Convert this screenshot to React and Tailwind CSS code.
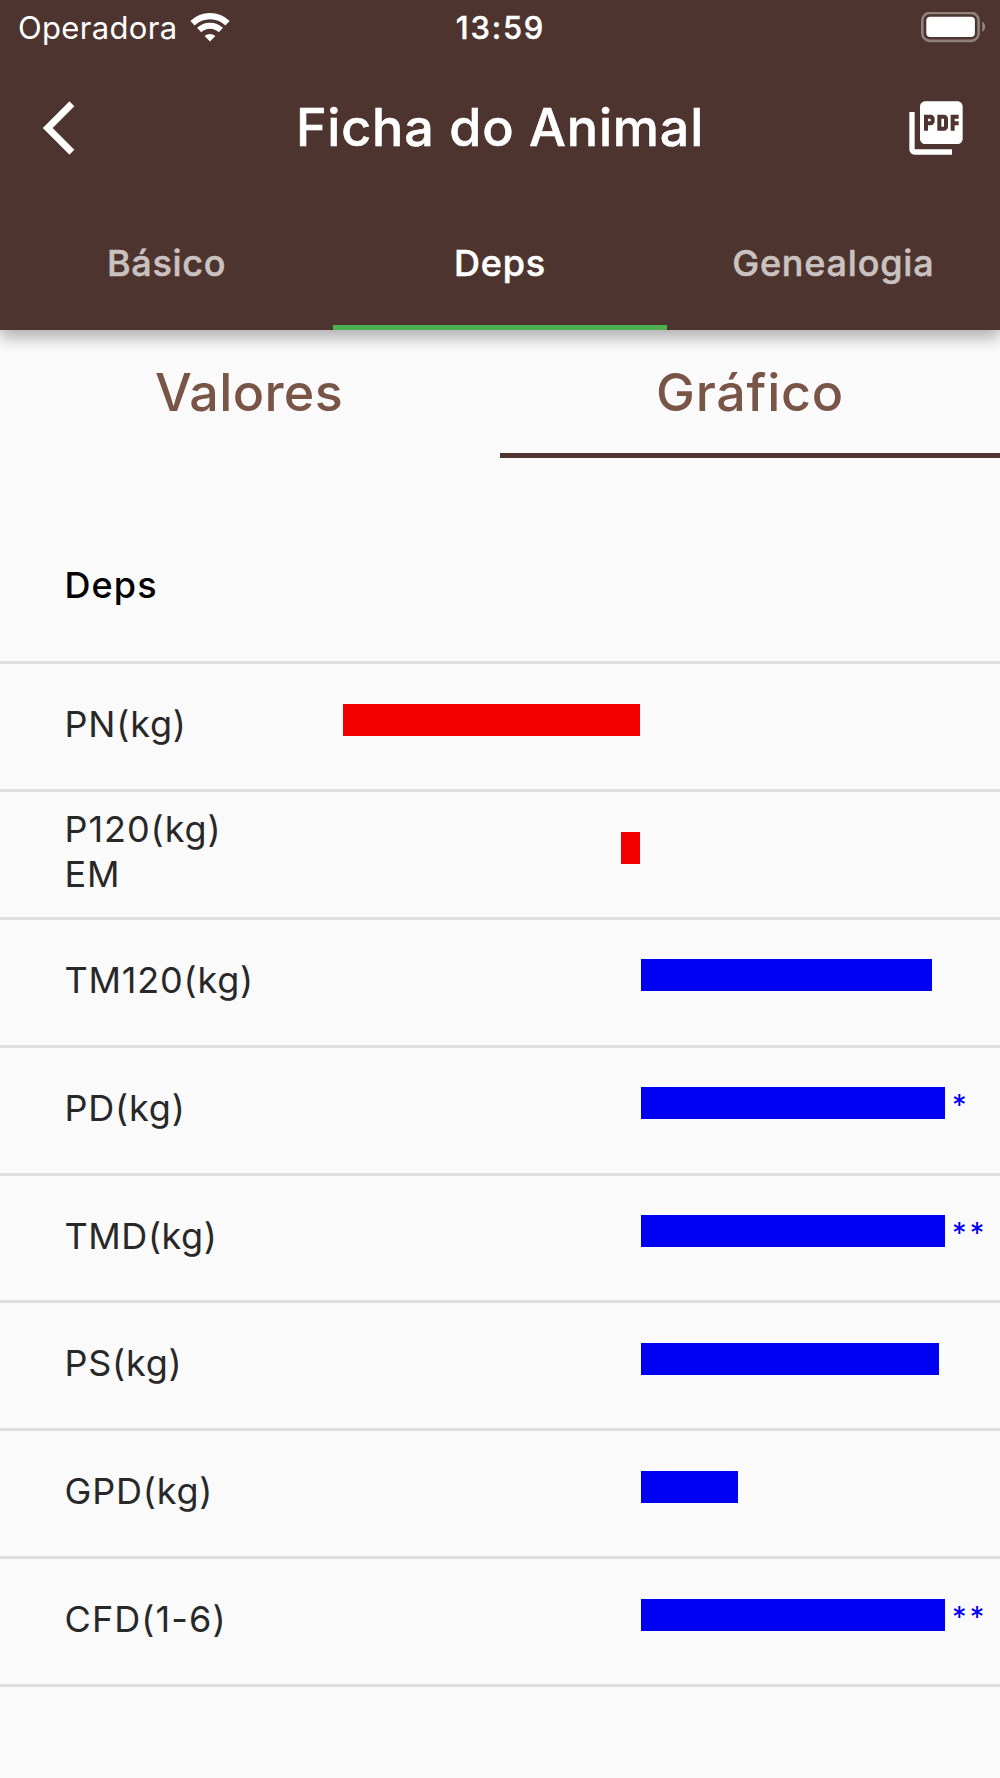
import { MdPictureAsPdf } from "react-icons/md";

const rows = [
  { label: "PN(kg)", spacing: "tracking-[0.8px]", negative: 297.4 },
  { label: "P120(kg) EM", spacing: "tracking-[0.95px]", negative: 19 },
  { label: "TM120(kg)", spacing: "tracking-[0.8px]", positive: 291.4 },
  { label: "PD(kg)", spacing: "tracking-[0.8px]", positive: 304, mark: "*" },
  { label: "TMD(kg)", spacing: "tracking-[0.55px]", positive: 304, mark: "**" },
  { label: "PS(kg)", spacing: "tracking-[0.75px]", positive: 298 },
  { label: "GPD(kg)", spacing: "tracking-[0.8px]", positive: 97 },
  { label: "CFD(1-6)", spacing: "tracking-[1.1px]", positive: 304, mark: "**" },
];

function WifiIcon() {
  return (
    <svg className="h-[30px] w-[40px] shrink-0" viewBox="0 0 40 30" fill="none">
      <path d="M2.5 10.2A25.3 25.3 0 0 1 37.5 10.2" stroke="white" strokeWidth="6.2" />
      <path d="M9.1 17A15.8 15.8 0 0 1 30.9 17" stroke="white" strokeWidth="6" />
      <path d="M20 28.5L14.6 22.9A8.6 8.6 0 0 1 25.4 22.9Z" fill="white" />
    </svg>
  );
}

function BatteryIcon() {
  return (
    <svg className="h-[32px] w-[66px] shrink-0" viewBox="0 0 66 32" fill="none">
      <rect x="2.3" y="0.9" width="56.3" height="28" rx="7.5" stroke="white" strokeOpacity="0.38" strokeWidth="2.6" />
      <rect x="6.3" y="4.8" width="48.6" height="20.3" rx="4" fill="white" />
      <path d="M62.3 9.8C66 11.3 66 18.3 62.3 19.8Z" fill="white" fillOpacity="0.42" />
    </svg>
  );
}

function StatusBar() {
  return (
    <div className="grid h-[55px] grid-cols-3 items-center pl-[18px] pr-[14px] text-[31px] leading-[37px]">
      <div className="flex items-center">
        <span className="w-[172px] tracking-[0.33px]">Operadora</span>
        <WifiIcon />
      </div>
      <span className="pr-[3px] text-center font-medium tracking-[1.8px] [-webkit-text-stroke:0.4px]">13:59</span>
      <div className="flex justify-end">
        <BatteryIcon />
      </div>
    </div>
  );
}

function Toolbar() {
  return (
    <div className="flex h-[146px] items-center justify-between pl-[43px] pr-[32px]">
      <svg className="h-16 w-16" viewBox="0 0 24 24" fill="currentColor" stroke="currentColor" strokeWidth="0.15">
        <path d="M11.67 3.87L9.9 2.1 0 12l9.9 9.9 1.77-1.77L3.54 12z" />
      </svg>
      <h1 className="mr-[11px] text-[52px] font-medium leading-[64px] tracking-[0.82px] [-webkit-text-stroke:0.6px]">Ficha do Animal</h1>
      <MdPictureAsPdf className="h-16 w-16" />
    </div>
  );
}

function Row({ label, spacing, negative, positive, mark }) {
  return (
    <div className="flex h-[127.95px] border-t-[3px] border-[#dedede]">
      <div className="flex w-[336px] items-center pb-[4px] pl-[64.5px]">
        <span className={`w-[190px] text-[36px] leading-[45px] text-[#282828] ${spacing}`}>{label}</span>
      </div>
      <div className="flex w-[304.4px] items-center justify-end pb-[13.4px]">
        {negative && <div className="h-[32px] bg-[#f20000]" style={{ width: negative }} />}
      </div>
      <div className="ml-[0.4px] flex flex-1 items-center pb-[13.4px]">
        {positive && <div className="h-[32px] shrink-0 bg-[#0000f2]" style={{ width: positive }} />}
        {mark && (
          <span className="ml-[7.2px] pt-[3px] text-[29px] leading-[34px] tracking-[3.2px] text-[#0000f2]">{mark}</span>
        )}
      </div>
    </div>
  );
}

export default function App() {
  return (
    <div className="flex h-[1778px] w-[1000px] flex-col overflow-hidden bg-[#fafafa] font-['Inter',sans-serif]">
      <header className="z-10 bg-[#4e342e] text-white shadow-[0_8px_14px_0_rgba(0,0,0,0.29)]">
        <StatusBar />
        <Toolbar />
        <nav className="grid h-[129px] grid-cols-3 text-center text-[36px] font-medium">
          <div className="flex items-center justify-center border-b-[5px] border-transparent tracking-[0.7px] text-[#cac2c0] [-webkit-text-stroke:0.5px]">Básico</div>
          <div className="flex items-center justify-center border-b-[5px] border-[#4caf50] tracking-[0.8px] [-webkit-text-stroke:0.5px]">Deps</div>
          <div className="flex items-center justify-center border-b-[5px] border-transparent tracking-[0.8px] text-[#cac2c0] [-webkit-text-stroke:0.5px]">Genealogia</div>
        </nav>
      </header>
      <nav className="grid h-[128px] grid-cols-2 pt-[2px] text-[52px] font-medium text-[#795548]">
        <div className="flex items-center justify-center border-b-[5px] border-transparent pr-[2px] tracking-[0.35px]">Valores</div>
        <div className="flex items-center justify-center border-b-[5px] border-[#4e342e] tracking-[0.75px]">Gráfico</div>
      </nav>
      <main className="mt-[50.8px]">
        <div className="flex h-[152px] items-center pl-[64.5px] text-[36px] font-medium tracking-[1.1px] text-black">Deps</div>
        {rows.map((row) => (
          <Row key={row.label} {...row} />
        ))}
        <div className="border-t-[3px] border-[#dedede]" />
      </main>
    </div>
  );
}
